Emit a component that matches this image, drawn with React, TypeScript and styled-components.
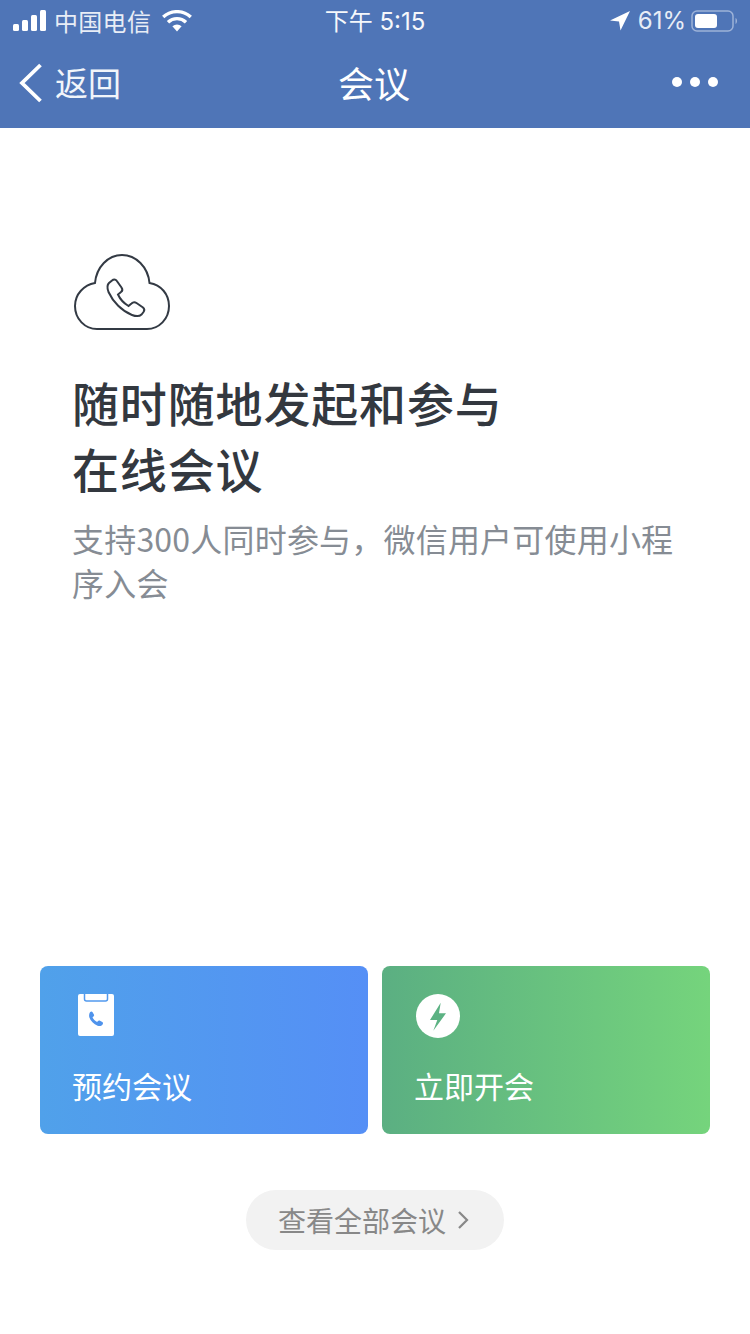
import styled, { createGlobalStyle } from 'styled-components';

const GlobalStyle = createGlobalStyle`
  html, body {
    margin: 0;
    padding: 0;
    background: #fff;
  }
  * {
    box-sizing: border-box;
  }
`;

const FONT = `"Noto Sans CJK SC", "Noto Sans", sans-serif`;

const Page = styled.div`
  display: flex;
  flex-direction: column;
  width: 750px;
  height: 1334px;
  overflow: hidden;
  background: #fff;
  font-family: ${FONT};
`;

const Header = styled.header`
  height: 128px;
  background: #4f75b7;
  color: #fff;
`;

const StatusBar = styled.div`
  display: grid;
  grid-template-columns: 1fr auto 1fr;
  align-items: center;
  height: 40px;
  padding: 0 13px;
  font-size: 24px;
  line-height: 40px;
`;

const StatusLeft = styled.div`
  display: flex;
  align-items: center;
`;

const Carrier = styled.span`
  margin-left: 8px;
  letter-spacing: 0.3px;
  color: #e8edf6;
`;

const WifiIcon = styled.svg`
  margin-left: 11px;
`;

const Time = styled.span`
  margin-top: 2px;
  font-family: "Inter", "Noto Sans CJK SC", sans-serif;
  font-size: 24px;
  color: #f6f8fb;
`;

const StatusRight = styled.div`
  display: flex;
  align-items: center;
  justify-content: flex-end;
`;

const Percent = styled.span`
  margin-left: 8px;
  font-family: "Inter", sans-serif;
  font-size: 24px;
  color: #e8edf6;
`;

const BatteryIcon = styled.svg`
  margin-left: 5px;
`;

const NavBar = styled.nav`
  display: grid;
  grid-template-columns: 1fr auto 1fr;
  align-items: center;
  height: 88px;
  padding: 0 33px 4px 31px;
`;

const BackLink = styled.div`
  display: flex;
  align-items: center;
  gap: 12px;
  margin-left: -12px;
  font-size: 33px;
  color: #f2f5fa;
`;

const BackChevron = styled.svg`
  margin-top: 2px;
`;

const NavTitle = styled.div`
  font-size: 36px;
`;

const MoreDots = styled.div`
  display: flex;
  justify-content: flex-end;
  gap: 8px;
  margin-right: -1px;
`;

const Dot = styled.span`
  width: 10px;
  height: 10px;
  border-radius: 50%;
  background: #fff;
`;

const Hero = styled.section`
  flex: 1;
  padding: 126px 73px 0;
`;

const HeroIcon = styled.svg`
  display: block;
  margin-left: 1px;
`;

const Heading = styled.h1`
  margin: 39px 0 0 -1px;
  font-size: 47px;
  font-weight: 500;
  line-height: 66px;
  letter-spacing: 0.85px;
  color: #33383f;
`;

const Subtitle = styled.p`
  margin: 15px -10px 0 -1px;
  font-size: 32px;
  line-height: 44px;
  letter-spacing: 0.2px;
  color: #868c94;
`;

const Actions = styled.div`
  display: flex;
  gap: 14px;
  padding: 0 40px;
`;

const ActionCard = styled.div<{ $from: string; $to: string }>`
  display: flex;
  flex-direction: column;
  justify-content: space-between;
  width: 328px;
  height: 168px;
  padding: 28px 33px 29px;
  border-radius: 8px;
  background: linear-gradient(90deg, ${({ $from }) => $from}, ${({ $to }) => $to});
  color: #fff;
`;

const ActionIcon = styled.svg`
  display: block;
  margin-left: 1px;
`;

const ActionLabel = styled.div`
  margin-left: -1px;
  font-size: 30px;
  line-height: 40px;
`;

const Footer = styled.div`
  display: flex;
  justify-content: center;
  padding: 56px 0 84px;
`;

const AllMeetings = styled.div`
  display: flex;
  align-items: center;
  gap: 11px;
  height: 60px;
  width: 258px;
  padding-left: 32px;
  border-radius: 30px;
  background: #f2f2f2;
  color: #888;
  font-size: 28px;
`;

const actions = [
  { id: 'schedule', label: '预约会议', from: '#50a1ea', to: '#558ff6' },
  { id: 'start', label: '立即开会', from: '#5baf82', to: '#75d47c' },
];

const ScheduleIcon = () => (
  <ActionIcon width="44" height="44" viewBox="0 0 44 44">
    <path d="M6 0h32a2 2 0 0 1 2 2v38a2 2 0 0 1-2 2H6a2 2 0 0 1-2-2V2a2 2 0 0 1 2-2z" fill="#fff" />
    <path d="M10.500 0v5a2 2 0 0 0 2 2h19a2 2 0 0 0 2-2V0" fill="#fff" stroke="#5199ee" strokeWidth="1.500" />
    <path
      d="M16 18.200c1-.9 2-.8 2.600.1l1.300 2.200c.4.8.3 1.400-.4 2l-1 .8c.9 2.100 2.500 3.700 4.600 4.700l.9-1c.5-.7 1.300-.8 2-.3l2.300 1.400c.9.5.9 1.600.3 2.400-1.300 1.500-2.900 2-5 1.200-3.900-1.600-7-4.700-8.300-8.500-.5-2-.1-3.700.7-5z"
      fill="#4f93ec"
    />
  </ActionIcon>
);

const StartIcon = () => (
  <ActionIcon width="44" height="44" viewBox="0 0 44 44">
    <circle cx="22" cy="22" r="22" fill="#fff" />
    <path d="M24.700 8.700 14 26h7.300l-4 10.700L30 19.300h-7z" fill="#5cb283" />
  </ActionIcon>
);

const App = () => {
  return (
    <Page>
      <GlobalStyle />
      <Header>
        <StatusBar>
          <StatusLeft>
            <svg width="33" height="22" viewBox="0 0 33 22">
              <rect x="0" y="14" width="6" height="7" rx="1.500" fill="#fff" />
              <rect x="9" y="10" width="6" height="11" rx="1.500" fill="#fff" />
              <rect x="18" y="5" width="6" height="16" rx="1.500" fill="#fff" />
              <rect x="27" y="0" width="6" height="21" rx="1.500" fill="#fff" />
            </svg>
            <Carrier>中国电信</Carrier>
            <WifiIcon width="30" height="22" viewBox="0 0 30 22">
              <path d="M15 21.500 10.400 16.200a7 7 0 0 1 9.200 0z" fill="#fff" />
              <path d="M6 12.200a13.200 13.200 0 0 1 18 0" fill="none" stroke="#fff" strokeWidth="3.400" />
              <path d="M1.200 7a20.500 20.500 0 0 1 27.600 0" fill="none" stroke="#fff" strokeWidth="3.400" />
            </WifiIcon>
          </StatusLeft>
          <Time>下午 5:15</Time>
          <StatusRight>
            <svg width="20" height="20" viewBox="0 0 20 20">
              <path d="M20 0 0 9.500l9 1 1.500 9z" fill="#fff" />
            </svg>
            <Percent>61%</Percent>
            <BatteryIcon width="46" height="22" viewBox="0 0 46 22">
              <rect x="1" y="1" width="41" height="20" rx="5" fill="none" stroke="#9db2d8" strokeWidth="1.500" />
              <rect x="4" y="4" width="22" height="14" rx="3" fill="#fff" />
              <path d="M44.500 8v6c1-.4 1.500-1.600 1.500-3s-.5-2.600-1.500-3z" fill="#9db2d8" />
            </BatteryIcon>
          </StatusRight>
        </StatusBar>
        <NavBar>
          <BackLink>
            <BackChevron width="24" height="40" viewBox="0 0 24 40">
              <path d="M21.500 2 3 20l18.500 18" fill="none" stroke="#fff" strokeWidth="3.800" />
            </BackChevron>
            返回
          </BackLink>
          <NavTitle>会议</NavTitle>
          <MoreDots>
            <Dot />
            <Dot />
            <Dot />
          </MoreDots>
        </NavBar>
      </Header>
      <Hero>
        <HeroIcon width="96" height="76" viewBox="0 0 96 76" fill="none" stroke="#333a44" strokeWidth="2">
          <path d="M23 75h50c12 0 22-10 22-23 0-12-8-21-19.500-23C74 13 62 1 48 1S22.500 13 21 29C10 31 1 40 1 52c0 13 10 23 22 23z" />
          <path d="M38 26.500c1.500-1.500 3.500-1.500 4.500 0l5 7c1.300 2 1 3.500-.5 4.500l-3 2.500c2 4.500 5.500 8.500 10.500 11.500l3-2.500c1.500-1.500 3.500-1.500 5-.5l6.500 4.500c1.500 1.200 1.500 3 .5 4.500l-2 2.500c-2.500 2.500-5.500 2-9.500.5-10-4-19-13-23.500-23-1.500-4-1.500-7 .5-9z" />
        </HeroIcon>
        <Heading>
          随时随地发起和参与
          <br />
          在线会议
        </Heading>
        <Subtitle>支持300人同时参与，微信用户可使用小程序入会</Subtitle>
      </Hero>
      <Actions>
        {actions.map((action) => (
          <ActionCard key={action.id} $from={action.from} $to={action.to}>
            {action.id === 'schedule' ? <ScheduleIcon /> : <StartIcon />}
            <ActionLabel>{action.label}</ActionLabel>
          </ActionCard>
        ))}
      </Actions>
      <Footer>
        <AllMeetings>
          查看全部会议
          <svg width="12" height="20" viewBox="0 0 12 20">
            <path d="M2 2l8 8-8 8" fill="none" stroke="#888" strokeWidth="2.200" />
          </svg>
        </AllMeetings>
      </Footer>
    </Page>
  );
};

export default App;
